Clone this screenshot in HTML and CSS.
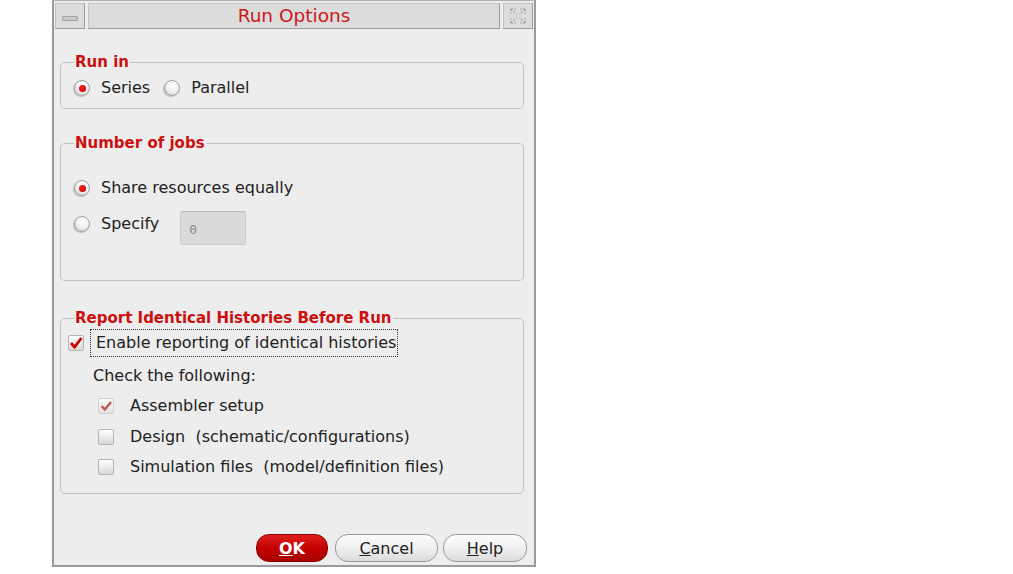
FILE: index.html
```html
<!DOCTYPE html>
<html>
<head>
<meta charset="utf-8">
<link rel="stylesheet" href="styles.css">
</head>
<body>
<div class="window">
  <div class="titlebar">
    <div class="tbtn min"><span class="minbar"></span></div>
    <div class="title">Run Options</div>
    <div class="tbtn close">
      <svg width="20" height="20" viewBox="0 0 20 20"><g fill="none" stroke="#a8a8a8" stroke-width="1.6" stroke-dasharray="2 1.5"><path d="M3 3 L8.5 8.5 M17 3 L11.5 8.5 M3 17 L8.5 11.5 M17 17 L11.5 11.5"/><path d="M3 3 h5 M3 3 v5 M17 3 h-5 M17 3 v5 M3 17 h5 M3 17 v-5 M17 17 h-5 M17 17 v-5"/></g></svg>
    </div>
  </div>
  <div class="body">
    <fieldset class="group g-run">
      <legend>Run in</legend>
      <div class="row">
        <span class="radio on"></span><span class="lbl l-series">Series</span>
        <span class="radio"></span><span class="lbl">Parallel</span>
      </div>
    </fieldset>

    <fieldset class="group g-jobs">
      <legend>Number of jobs</legend>
      <div class="row r-share"><span class="radio on"></span><span class="lbl">Share resources equally</span></div>
      <div class="row r-spec"><span class="radio"></span><span class="lbl">Specify</span><span class="numbox">0</span></div>
    </fieldset>

    <fieldset class="group g-report">
      <legend>Report Identical Histories Before Run</legend>
      <div class="row r-enable">
        <span class="check on"><svg width="14" height="14" viewBox="0 0 14 14"><path d="M2 7 L5.5 11 L12.5 2" fill="none" stroke="#d00000" stroke-width="2.8"/></svg></span>
        <span class="lbl focus">Enable reporting of identical histories</span>
      </div>
      <div class="sub">Check the following:</div>
      <div class="row r-item">
        <span class="check dis"><svg width="14" height="14" viewBox="0 0 14 14"><path d="M2.5 7 L5.8 10.5 L12 3" fill="none" stroke="#c05858" stroke-width="2.4"/></svg></span>
        <span class="lbl">Assembler setup</span>
      </div>
      <div class="row r-item"><span class="check"></span><span class="lbl">Design&nbsp; (schematic/configurations)</span></div>
      <div class="row r-item"><span class="check"></span><span class="lbl">Simulation files&nbsp; (model/definition files)</span></div>
    </fieldset>

    <div class="buttons">
      <button class="btn ok"><u>O</u>K</button>
      <button class="btn cancel"><u>C</u>ancel</button>
      <button class="btn help"><u>H</u>elp</button>
    </div>
  </div>
</div>
</body>
</html>
```

FILE: styles.css
```css
html, body {
  margin: 0;
  padding: 0;
  background: #ffffff;
}
body {
  font-family: "DejaVu Sans", "Liberation Sans", sans-serif;
  font-size: 16px;
  color: #222;
}
.window {
  margin-left: 52px;
  width: 480px;
  height: 564px;
  border: 2px solid #9a9a9a;
  border-top: 1px solid #b0b0b0;
  background: #ededed;
  display: flex;
  flex-direction: column;
}
.titlebar {
  height: 26px;
  margin-top: 2px;
  display: flex;
  gap: 3px;
  padding: 0 1px;
}
.tbtn {
  width: 28px;
  background: #dcdcdc;
  border: 1px solid #c4c4c4;
  border-right-color: #9c9c9c;
  border-bottom-color: #9c9c9c;
  display: flex;
  align-items: center;
  justify-content: center;
}
.minbar {
  width: 14px;
  height: 3px;
  background: #c8c8c8;
  border: 1px solid #a4a4a4;
  border-radius: 1px;
  margin-top: 4px;
}
.title {
  flex: 1;
  background: #dcdcdc;
  border: 1px solid #c4c4c4;
  border-right-color: #9c9c9c;
  border-bottom-color: #9c9c9c;
  color: #cc1818;
  font-size: 18.5px;
  text-align: center;
  line-height: 23px;
}
.body {
  flex: 1;
  display: flex;
  flex-direction: column;
  padding: 25px 7px 0 6px;
}
.group {
  margin: 0 3px 0 0;
  border: 1px solid #c2c2c2;
  border-radius: 5px;
  padding: 0;
  min-width: 0;
}
.group legend {
  color: #cc1010;
  font-weight: bold;
  font-size: 15px;
  padding: 0 1px;
  margin-left: 13px;
  line-height: 17px;
}
.row {
  display: flex;
  align-items: center;
}
.lbl {
  line-height: 18px;
}
.radio {
  width: 16px;
  height: 16px;
  box-sizing: border-box;
  border-radius: 50%;
  border: 1px solid #a0a0a0;
  background: radial-gradient(circle at 55% 35%, #ffffff 0%, #f0f0f0 50%, #c4c4c4 100%);
  box-shadow: -1px 1px 1px rgba(0,0,0,0.2);
  margin-right: 11px;
  flex: none;
  position: relative;
}
.radio.on::after {
  content: "";
  position: absolute;
  left: 3.5px;
  top: 3.5px;
  width: 7px;
  height: 7px;
  border-radius: 50%;
  background: radial-gradient(circle at 40% 40%, #ff2020, #b80000);
}
.g-run {
  height: 53px;
}
.g-run .row {
  margin-top: 8px;
  margin-left: 13px;
}
.l-series {
  margin-right: 14px;
}
.g-jobs {
  margin-top: 26px;
  height: 144px;
}
.r-share {
  margin-top: 27px;
  margin-left: 13px;
}
.r-spec {
  margin-top: 18px;
  margin-left: 13px;
  align-items: flex-start;
  height: 18px;
}
.r-spec .radio {
  margin-top: 1px;
}
.numbox {
  margin-left: 21px;
  margin-top: -4px;
  width: 66px;
  height: 34px;
  flex: none;
  box-sizing: border-box;
  background: #dadada;
  border: 1px solid #cdcdcd;
  border-top-color: #bdbdbd;
  border-radius: 2px;
  font-family: "DejaVu Sans Mono", monospace;
  font-size: 13px;
  color: #8a8a8a;
  padding: 10px 0 0 8px;
}
.g-report {
  margin-top: 29px;
  height: 182px;
}
.check {
  width: 16px;
  height: 16px;
  box-sizing: border-box;
  border: 1px solid #b4b4b4;
  border-radius: 2px;
  background: linear-gradient(#ffffff, #d8d8d8);
  flex: none;
  display: flex;
  align-items: center;
  justify-content: center;
}
.r-enable {
  margin-top: 2px;
  margin-left: 7px;
}
.r-enable .check {
  margin-right: 6px;
}
.focus {
  border: 1px dotted #333;
  padding: 4px 0 4px 5px;
  width: 308px;
  box-sizing: border-box;
}
.sub {
  margin-left: 32px;
  margin-top: 10px;
  line-height: 18px;
}
.r-item {
  margin-left: 37px;
  margin-top: 12px;
}
.r-item + .r-item {
  margin-top: 13px;
}
.r-item + .r-item + .r-item {
  margin-top: 12px;
}
.r-item .check {
  margin-right: 16px;
}
.check.dis {
  border-color: #cfcfcf;
  background: linear-gradient(#fafafa, #e4e4e4);
}
.buttons {
  margin-top: auto;
  margin-bottom: 3px;
  display: flex;
  justify-content: flex-end;
}
.btn {
  height: 28px;
  border-radius: 13px;
  border: 1px solid #9a9a9a;
  background: linear-gradient(#fdfdfd, #f0f0f0 50%, #dcdcdc);
  font-family: "DejaVu Sans", sans-serif;
  font-size: 16px;
  color: #222;
  padding: 0;
}
.btn.ok {
  width: 72px;
  background: linear-gradient(#e02020, #c40000 50%, #a80000);
  border-color: #8a0000;
  color: #ffffff;
  font-weight: bold;
  margin-right: 7px;
}
.btn.cancel {
  width: 103px;
  margin-right: 5px;
}
.btn.help {
  width: 84px;
}
```
